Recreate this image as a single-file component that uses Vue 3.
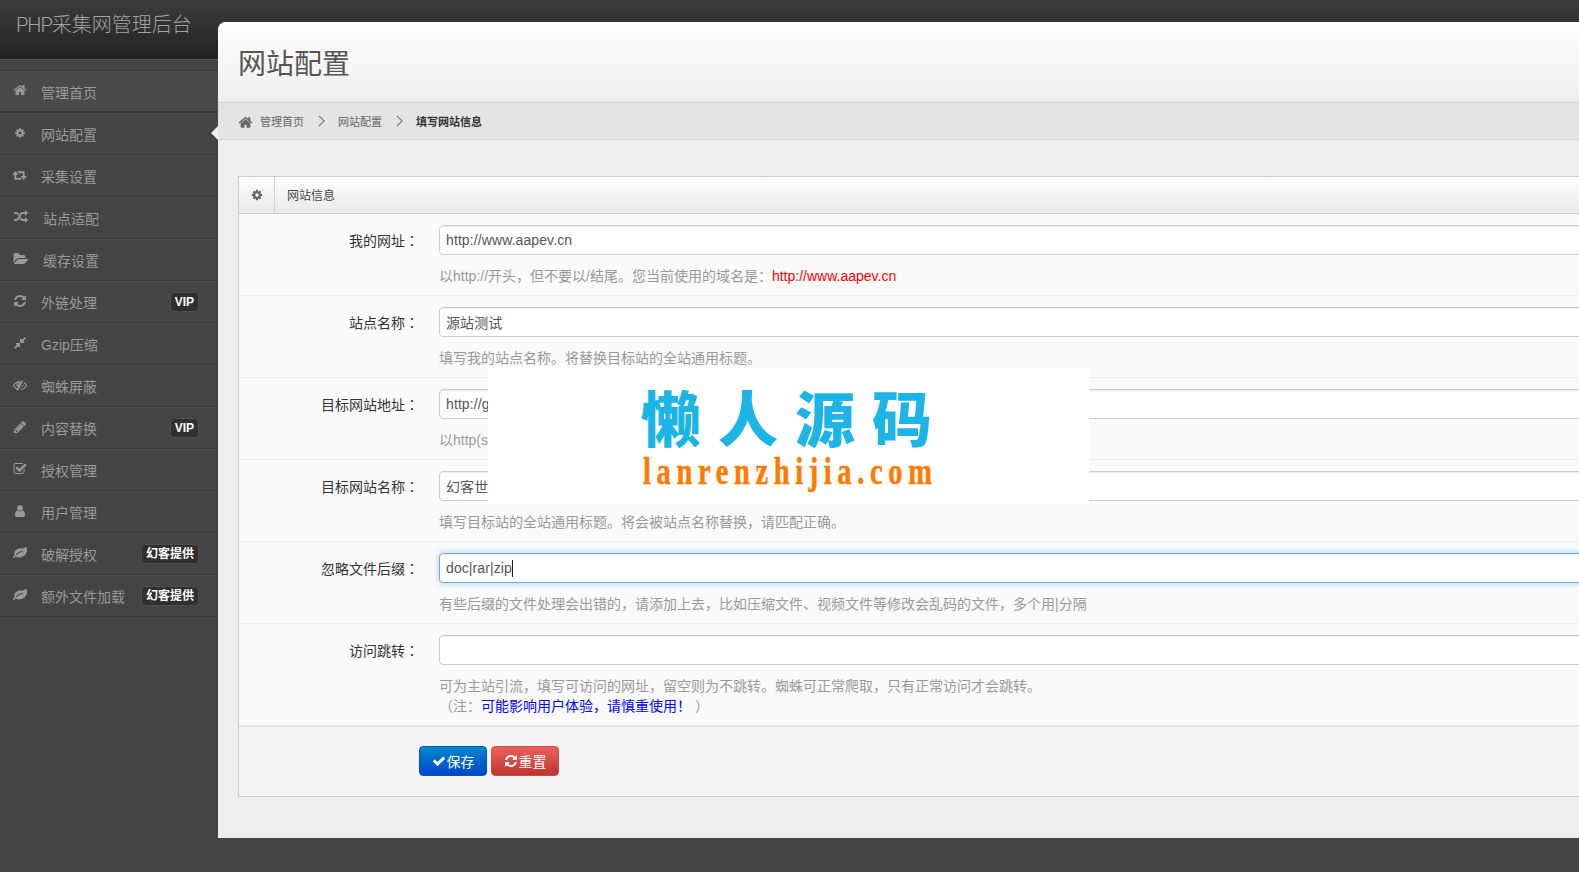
<script setup>
const P = {
  home: ['0 0 1792 1792', 'M1472 992v480q0 26-19 45t-45 19h-384v-384h-256v384h-384q-26 0-45-19t-19-45v-480q0-1 .5-3t.5-3l575-474 575 474q1 2 1 6zm223-69l-62 74q-8 9-21 11h-3q-13 0-21-7l-692-577-692 577q-12 8-24 7-13-2-21-11l-62-74q-8-10-7-23.5t11-21.5l719-599q32-26 76-26t76 26l244 204v-195q0-14 9-23t23-9h192q14 0 23 9t9 23v408l219 182q10 8 11 21.5t-7 23.5z'],
  cog: ['0 0 1792 1792', 'M1152 896q0-106-75-181t-181-75-181 75-75 181 75 181 181 75 181-75 75-181zm512-109v222q0 12-8 23t-20 13l-185 28q-19 54-39 91 35 50 107 138 10 12 10 25t-9 23q-27 37-99 108t-94 71q-12 0-26-9l-138-108q-44 23-91 38-16 136-29 186-7 28-36 28h-222q-14 0-24.500-8.500t-11.500-21.500l-28-184q-49-16-90-37l-141 107q-10 9-25 9-14 0-25-11-126-114-165-168-7-10-7-23 0-12 8-23 15-21 51-66.500t54-70.500q-27-50-41-99l-183-27q-13-2-21-12.500t-8-23.500v-222q0-12 8-23t19-13l186-28q14-46 39-92-40-57-107-138-10-12-10-24 0-10 9-23 26-36 98.500-107.500t94.500-71.500q13 0 26 10l138 107q44-23 91-38 16-136 29-186 7-28 36-28h222q14 0 24.500 8.500t11.500 21.500l28 184q49 16 90 37l142-107q9-9 24-9 13 0 25 10 129 119 165 170 7 8 7 22 0 12-8 23-15 21-51 66.500t-54 70.500q26 50 41 98l183 28q13 2 21 12.500t8 23.500z'],
  retweet: ['0 0 1920 1792', 'M1216 1504q0 13-9.500 22.500t-22.500 9.500h-960q-8 0-13.500-2t-9-7-5.500-8-3-11.500-1-11.500v-600h-192q-26 0-45-19t-19-45q0-24 15-41l320-384q19-22 49-22t49 22l320 384q15 17 15 41 0 26-19 45t-45 19h-192v384h576q16 0 25 11l160 192q7 10 7 21zm640-416q0 24-15 41l-320 384q-20 23-49 23t-49-23l-320-384q-15-17-15-41 0-26 19-45t45-19h192v-384h-576q-16 0-25-12l-160-192q-7-9-7-20 0-13 9.500-22.500t22.500-9.500h960q8 0 13.500 2t9 7 5.500 8 3 11.500 1 11.500v600h192q26 0 45 19t19 45z'],
  random: ['0 0 1792 1792', 'M666 481q-60 92-137 273-22-45-37-72.500t-40.500-63.500-51-56.500-63-35-81.500-14.500h-224q-14 0-23-9t-9-23v-192q0-14 9-23t23-9h224q250 0 410 225zm1126 799q0 14-9 23l-320 320q-9 9-23 9-13 0-22.500-9.500t-9.500-22.500v-192q-32 0-85 .5t-81 1-73-1-71-5-64-10.500-63-18.500-58-28.500-59-40-55-53.500-56-69.500q59-93 136-273 22 45 37 72.500t40.500 63.500 51 56.500 63 35 81.500 14.500h256v-192q0-14 9-23t23-9q12 0 24 10l319 319q9 9 9 23zm0-896q0 14-9 23l-320 320q-9 9-23 9-13 0-22.500-9.500t-9.500-22.500v-192h-256q-48 0-87 15t-69 45-51 61.500-45 77.500q-32 62-78 171-29 66-49.500 111t-54 105-64 100-74 83-90 68.500-106.500 42-128 16.500h-224q-14 0-23-9t-9-23v-192q0-14 9-23t23-9h224q48 0 87-15t69-45 51-61.500 45-77.500q32-62 78-171 29-66 49.500-111t54-105 64-100 74-83 90-68.500 106.500-42 128-16.500h256v-192q0-14 9-23t23-9q12 0 24 10l319 319q9 9 9 23z'],
  folder: ['0 0 1920 1792', 'M1879 952q0 31-31 66l-336 396q-43 51-120.500 86.500t-143.500 35.500h-1088q-34 0-60.500-13t-26.500-43q0-31 31-66l336-396q43-51 120.500-86.500t143.500-35.500h1088q34 0 60.500 13t26.500 43zm-343-344v160h-832q-94 0-197 47.500t-164 119.500l-337 396-5 6q0-4-.5-12.500t-.5-12.500v-960q0-92 66-158t158-66h320q92 0 158 66t66 158v32h544q92 0 158 66t66 158z'],
  refresh: ['0 0 1792 1792', 'M1639 1056q0 5-1 7-64 268-268 434.500t-478 166.500q-146 0-282.500-55t-243.500-157l-129 129q-19 19-45 19t-45-19-19-45v-448q0-26 19-45t45-19h448q26 0 45 19t19 45-19 45l-137 137q71 66 161 102t187 36q134 0 250-65t186-179q11-17 53-117 8-23 30-23h192q13 0 22.500 9.500t9.500 22.500zm25-800v448q0 26-19 45t-45 19h-448q-26 0-45-19t-19-45 19-45l138-138q-148-137-349-137-134 0-250 65t-186 179q-11 17-53 117-8 23-30 23h-199q-13 0-22.500-9.500t-9.500-22.500v-7q65-268 270-434.500t480-166.500q146 0 284 55.500t245 156.500l130-129q19-19 45-19t45 19 19 45z'],
  compress: ['0 0 1792 1792', 'M896 960v448q0 26-19 45t-45 19-45-19l-144-144-332 332q-10 10-23 10t-23-10l-114-114q-10-10-10-23t10-23l332-332-144-144q-19-19-19-45t19-45 45-19h448q26 0 45 19t19 45zm755-672q0 13-10 23l-332 332 144 144q19 19 19 45t-19 45-45 19h-448q-26 0-45-19t-19-45v-448q0-26 19-45t45-19 45 19l144 144 332-332q10-10 23-10t23 10l114 114q10 10 10 23z'],
  eye: ['0 0 1792 1792', 'M555 1335l78-141q-87-63-136-159t-49-203q0-121 61-225-229 117-381 353 167 258 427 375zm389-759q0-20-14-34t-34-14q-125 0-214.500 89.500t-89.500 214.500q0 20 14 34t34 14 34-14 14-34q0-86 61-147t147-61q20 0 34-14t14-34zm363-191q0 7-1 9-106 189-316 567t-315 566l-49 89q-10 16-28 16-12 0-134-70-16-10-16-28 0-12 44-87-143-65-263.500-173t-208.500-245q-20-31-20-69t20-69q153-235 380-371t496-136q89 0 180 17l54-97q10-16 28-16 5 0 18 6t31 15.500 33 18.500 31.500 18.500 19.500 11.500q16 10 16 27zm37 447q0 139-79 253.500t-209 164.500l280-502q8 45 8 84zm448 128q0 35-20 69-39 64-109 145-150 172-347.500 267t-419.500 95l74-132q212-18 392.500-137t301.500-307q-115-179-282-294l63-112q95 64 182.500 153t144.500 184q20 34 20 69z'],
  pencil: ['0 0 1792 1792', 'M491 1536l91-91-235-235-91 91v107h128v128h107zm523-928q0-22-22-22-10 0-17 7l-542 542q-7 7-7 17 0 22 22 22 10 0 17-7l542-542q7-7 7-17zm-54-192l416 416-832 832h-416v-416zm683 96q0 53-37 90l-166 166-416-416 166-165q36-38 90-38 53 0 91 38l235 234q37 39 37 91z'],
  check: ['0 0 1792 1792', 'M1472 930v318q0 119-84.500 203.500t-203.500 84.500h-832q-119 0-203.500-84.500t-84.500-203.500v-832q0-119 84.500-203.500t203.500-84.500h832q63 0 117 25 15 7 18 23 3 17-9 29l-49 49q-10 10-23 10-3 0-9-2-23-6-45-6h-832q-66 0-113 47t-47 113v832q0 66 47 113t113 47h832q66 0 113-47t47-113v-254q0-13 9-22l64-64q10-10 23-10 6 0 12 3 20 8 20 29zm231-489l-814 814q-24 24-57 24t-57-24l-430-430q-24-24-24-57t24-57l110-110q24-24 57-24t57 24l263 263 647-647q24-24 57-24t57 24l110 110q24 24 24 57t-24 57z'],
  user: ['0 0 1792 1792', 'M1536 1399q0 109-62.500 187t-150.500 78h-854q-88 0-150.500-78t-62.500-187q0-85 8.500-160.500t31.500-152 58.500-131 94-89 134.500-34.500q131 128 313 128t313-128q76 0 134.500 34.500t94 89 58.500 131 31.500 152 8.500 160.500zm-256-887q0 159-112.500 271.500t-271.500 112.500-271.500-112.500-112.500-271.500 112.500-271.500 271.500-112.500 271.500 112.500 112.500 271.500z'],
  leaf: ['0 0 1792 1792', 'M1280 704q0-26-19-45t-45-19q-172 0-318 49.500t-259.500 134-235.500 219.500q-19 21-19 45 0 26 19 45t45 19q24 0 45-19 27-24 74-71t67-66q137-124 268.500-176t313.500-52q26 0 45-19t19-45zm512-198q0 95-20 193-46 224-184.500 383t-357.500 268q-214 108-438 108-148 0-286-47-15-5-88-42t-96-37q-16 0-39.500 32t-45 70-52.500 70-60 32q-30 0-51-11t-31-24-27-42q-2-4-6-11t-5.500-10-3-9.500-1.500-13.500q0-35 31-73.500t68-65.500 68-56 31-48q0-4-14-38t-16-44q-9-51-9-104 0-115 43.500-220t119-184.500 170.500-139 204-95.500q55-18 145-25.500t179.500-9 178.500-6 163.500-24 113.500-56.500l29.500-29.500 29.500-28 27-20 36.500-16 43.500-4.500q39 0 70.500 46t47.500 112 24 124 8 96z'],
  ok: ['0 0 1792 1792', 'M1671 566q0 40-28 68l-724 724-136 136q-28 28-68 28t-68-28l-136-136-362-362q-28-28-28-68t28-68l136-136q28-28 68-28t68 28l294 295 656-657q28-28 68-28t68 28l136 136q28 28 28 68z'],
}

const menu = [
  { icon: 'home', text: '管理首页' },
  { icon: 'cog', text: '网站配置', active: true, small: true },
  { icon: 'retweet', text: '采集设置' },
  { icon: 'random', text: '站点适配', wide: true },
  { icon: 'folder', text: '缓存设置', wide: true },
  { icon: 'refresh', text: '外链处理', badge: 'VIP' },
  { icon: 'compress', text: 'Gzip压缩' },
  { icon: 'eye', text: '蜘蛛屏蔽' },
  { icon: 'pencil', text: '内容替换', badge: 'VIP' },
  { icon: 'check', text: '授权管理' },
  { icon: 'user', text: '用户管理' },
  { icon: 'leaf', text: '破解授权', badge: '幻客提供' },
  { icon: 'leaf', text: '额外文件加载', badge: '幻客提供' },
]
</script>

<template>
  <div class="page">
    <div class="topbar">
      <div class="brand"><span class="php">PHP</span>采集网管理后台</div>
    </div>
    <aside class="side">
      <ul class="menu">
        <li v-for="m in menu" :key="m.text" class="item" :class="{ first: m.icon === 'home', active: m.active }">
          <svg class="mi" :class="{ wide: m.wide, small: m.small }" :viewBox="P[m.icon][0]"><path :d="P[m.icon][1]" /></svg>
          <span class="mt">{{ m.text }}</span>
          <span v-if="m.badge" class="badge">{{ m.badge }}</span>
        </li>
      </ul>
    </aside>
    <main class="main">
      <header class="head"><h1>网站配置</h1></header>
      <nav class="crumbs">
        <svg class="ci" :viewBox="P.home[0]"><path :d="P.home[1]" /></svg>
        <span>管理首页</span>
        <svg class="chev" viewBox="0 0 8 14"><path d="M1 1l6 6-6 6" /></svg>
        <span>网站配置</span>
        <svg class="chev" viewBox="0 0 8 14"><path d="M1 1l6 6-6 6" /></svg>
        <b>填写网站信息</b>
      </nav>
      <section class="panel">
        <div class="ptitle">
          <span class="pico"><svg :viewBox="P.cog[0]"><path :d="P.cog[1]" /></svg></span>
          <span class="pname">网站信息</span>
        </div>
        <div class="row">
          <label>我的网址<span class="colon">：</span></label>
          <div class="field">
            <input value="http://www.aapev.cn" />
            <p>以http://开头，但不要以/结尾。您当前使用的域名是：<span class="red">http://www.aapev.cn</span></p>
          </div>
        </div>
        <div class="row">
          <label>站点名称<span class="colon">：</span></label>
          <div class="field">
            <input value="源站测试" />
            <p>填写我的站点名称。将替换目标站的全站通用标题。</p>
          </div>
        </div>
        <div class="row">
          <label>目标网站地址<span class="colon">：</span></label>
          <div class="field">
            <input value="http://g" />
            <p>以http(s</p>
          </div>
        </div>
        <div class="row">
          <label>目标网站名称<span class="colon">：</span></label>
          <div class="field">
            <input value="幻客世" />
            <p>填写目标站的全站通用标题。将会被站点名称替换，请匹配正确。</p>
          </div>
        </div>
        <div class="row">
          <label>忽略文件后缀<span class="colon">：</span></label>
          <div class="field">
            <div class="focus">doc|rar|zip<i class="caret"></i></div>
            <p>有些后缀的文件处理会出错的，请添加上去，比如压缩文件、视频文件等修改会乱码的文件，多个用|分隔</p>
          </div>
        </div>
        <div class="row last">
          <label>访问跳转<span class="colon">：</span></label>
          <div class="field">
            <input value="" />
            <p>可为主站引流，填写可访问的网址，留空则为不跳转。蜘蛛可正常爬取，只有正常访问才会跳转。<br />（注：<span class="blue">可能影响用户体验，请慎重使用！</span> ）</p>
          </div>
        </div>
        <div class="actions">
          <button class="btn save"><svg :viewBox="P.ok[0]"><path :d="P.ok[1]" /></svg>保存</button>
          <button class="btn reset"><svg :viewBox="P.refresh[0]"><path :d="P.refresh[1]" /></svg>重置</button>
        </div>
      </section>
    </main>
    <div class="mark">
      <div class="mark-cn">懒人源码</div>
      <div class="mark-en">lanrenzhijia.com</div>
    </div>
  </div>
</template>

<style>
html, body { margin: 0; background: #444; overflow: hidden; }
</style>

<style scoped>
* { box-sizing: border-box; }
.page {
  position: relative;
  width: 1579px;
  height: 872px;
  overflow: hidden;
  background: #444;
  font-family: "Liberation Sans", "Noto Sans CJK SC", sans-serif;
  display: grid;
  grid-template-columns: 218px 1fr;
  grid-template-rows: 60px 1fr;
}
.topbar {
  grid-column: 1 / 3;
  grid-row: 1;
  background: linear-gradient(#3c3c3c, #222);
  border-bottom: 1px solid #555;
  padding: 11px 0 0 16px;
}
.brand {
  font-family: Roboto, "Noto Sans CJK SC", sans-serif;
  font-weight: 300;
  font-size: 20px;
  line-height: 28px;
  color: #a2a2a2;
}
.php { letter-spacing: -1px; }
.side { grid-column: 1; grid-row: 2; padding-top: 10px; }
.menu { list-style: none; margin: 0; padding: 0; border-top: 1px solid #383838; }
.item {
  position: relative;
  height: 42px;
  display: flex;
  align-items: center;
  padding: 0 19px 0 13px;
  color: #999;
  font-size: 14px;
  border-bottom: 1px solid #383838;
  box-shadow: inset 0 1px 0 #4e4e4e;
}
.item.first { background: #4a4a4a; border-bottom: 2px solid #363636; }
.item.active::after {
  content: "";
  position: absolute;
  right: 0;
  top: 13px;
  border: 7px solid transparent;
  border-left: 0;
  border-right-color: #eee;
}
.mi { width: 14px; height: 14px; fill: #999; margin: -2px 14px 0 0; flex: none; }
.mi.wide { width: 16px; }
.mi.small { padding: 1.5px; }
.mt { flex: 1; margin-top: 1px; }
.first .mt { margin-top: 2px; }
.badge {
  height: 20px;
  line-height: 18px;
  padding: 0 4px;
  border: 1px solid #4e4e4e;
  border-radius: 4px;
  background: #2f2f2f;
  color: #fff;
  font-size: 12px;
  font-weight: 700;
}
.main {
  grid-column: 2;
  grid-row: 1 / 3;
  margin: 22px -30px 34px 0;
  background: #eee;
  border-radius: 8px 0 0 0;
  overflow: hidden;
  display: flex;
  flex-direction: column;
}
.head {
  height: 81px;
  flex: none;
  background: linear-gradient(#fff, #eee);
  border-bottom: 1px solid #d4d4d4;
  padding: 23px 0 0 20px;
}
h1 {
  margin: 0;
  font-size: 28px;
  line-height: 40px;
  font-weight: 400;
  color: #555;
}
.crumbs {
  height: 37px;
  flex: none;
  background: #e4e4e4;
  border-bottom: 1px solid #d2d2d2;
  display: flex;
  align-items: center;
  padding-left: 20px;
  font-size: 11px;
  color: #666;
}
.crumbs b { color: #333; }
.ci { width: 15px; height: 15px; fill: #666; margin-right: 7px; margin-top: 3px; }
.chev { width: 7px; height: 12px; margin: 0 13.5px; fill: none; stroke: #777; stroke-width: 1.3; }
.panel {
  margin: 36px 0 0 20px;
  height: 621px;
  border: 1px solid #ccc;
  border-right: 0;
  background: #fafafa;
  display: flex;
  flex-direction: column;
}
.ptitle {
  height: 37px;
  flex: none;
  display: flex;
  align-items: stretch;
  background: linear-gradient(#fdfdfd, #eaeaea);
  border-bottom: 1px solid #ccc;
  color: #444;
  font-size: 12px;
}
.pico {
  width: 36px;
  border-right: 1px solid #d4d4d4;
  display: flex;
  align-items: center;
  justify-content: center;
}
.pico svg { width: 12px; height: 12px; fill: #666; margin-bottom: 1px; }
.pname { align-self: center; padding: 0 0 1px 12px; }
.row {
  height: 82px;
  flex: none;
  display: flex;
  border-bottom: 1px solid #eee;
}
.row label {
  width: 181px;
  flex: none;
  padding: 11px 1px 0 0;
  text-align: right;
  font-size: 14px;
  line-height: 30px;
  color: #333;
}
.colon { font-family: "Noto Sans CJK TC", sans-serif; }
.row.last { height: 103px; border-bottom: 2px solid #e6e6e6; }
.field { padding: 11px 0 0 19px; flex: 1; min-width: 0; }
input, .focus {
  display: block;
  width: 100%;
  height: 30px;
  border: 1px solid #ccc;
  border-radius: 4px;
  background: #fff;
  padding: 0 6px;
  font: 14px/28px "Liberation Sans", "Noto Sans CJK SC", sans-serif;
  letter-spacing: .1px;
  color: #555;
  box-shadow: inset 0 1px 1px rgba(0,0,0,.08);
  outline: none;
}
.focus {
  border-color: #66afe9;
  box-shadow: inset 0 1px 1px rgba(0,0,0,.075), 0 0 6px rgba(102,175,233,.6);
}
.caret {
  display: inline-block;
  width: 1px;
  height: 17px;
  background: #222;
  vertical-align: -4px;
}
.field p {
  margin: 11px 0 0;
  font-size: 14px;
  line-height: 20px;
  color: #999;
}
.red { color: #f00; }
.blue { color: #00f; }
.actions {
  flex: 1;
  background: #f5f5f5;
  padding: 19px 0 0 180px;
  display: flex;
  gap: 4px;
  align-items: flex-start;
}
.btn {
  width: 68px;
  height: 30px;
  border-radius: 4px;
  color: #fff;
  font: 14px "Liberation Sans", "Noto Sans CJK SC", sans-serif;
  padding: 0;
  display: flex;
  align-items: center;
  justify-content: center;
  gap: 1px;
}
.btn svg { width: 14px; height: 14px; fill: #fff; }
.save { background: linear-gradient(#0088cc, #0044cc); border: 1px solid #0055bb; }
.reset { background: linear-gradient(#ee5f5b, #bd362f); border: 1px solid #c9504a; }
.mark {
  position: absolute;
  left: 488px;
  top: 368px;
  width: 601px;
  height: 136px;
  background: #fff;
  padding-left: 153px;
}
.mark-cn {
  margin-top: 16px;
  font-family: "Noto Sans CJK SC", sans-serif;
  font-weight: 900;
  font-size: 60px;
  line-height: 64px;
  letter-spacing: 17px;
  color: #1db4e8;
  white-space: nowrap;
}
.mark-en {
  margin: 4px 0 0 2px;
  font-family: "Liberation Serif", serif;
  font-weight: 700;
  font-size: 38px;
  line-height: 38px;
  letter-spacing: 7.5px;
  color: #ff7a00;
  -webkit-text-stroke: .5px #ff7a00;
  white-space: nowrap;
  transform: scaleX(.75);
  transform-origin: left center;
}
</style>
